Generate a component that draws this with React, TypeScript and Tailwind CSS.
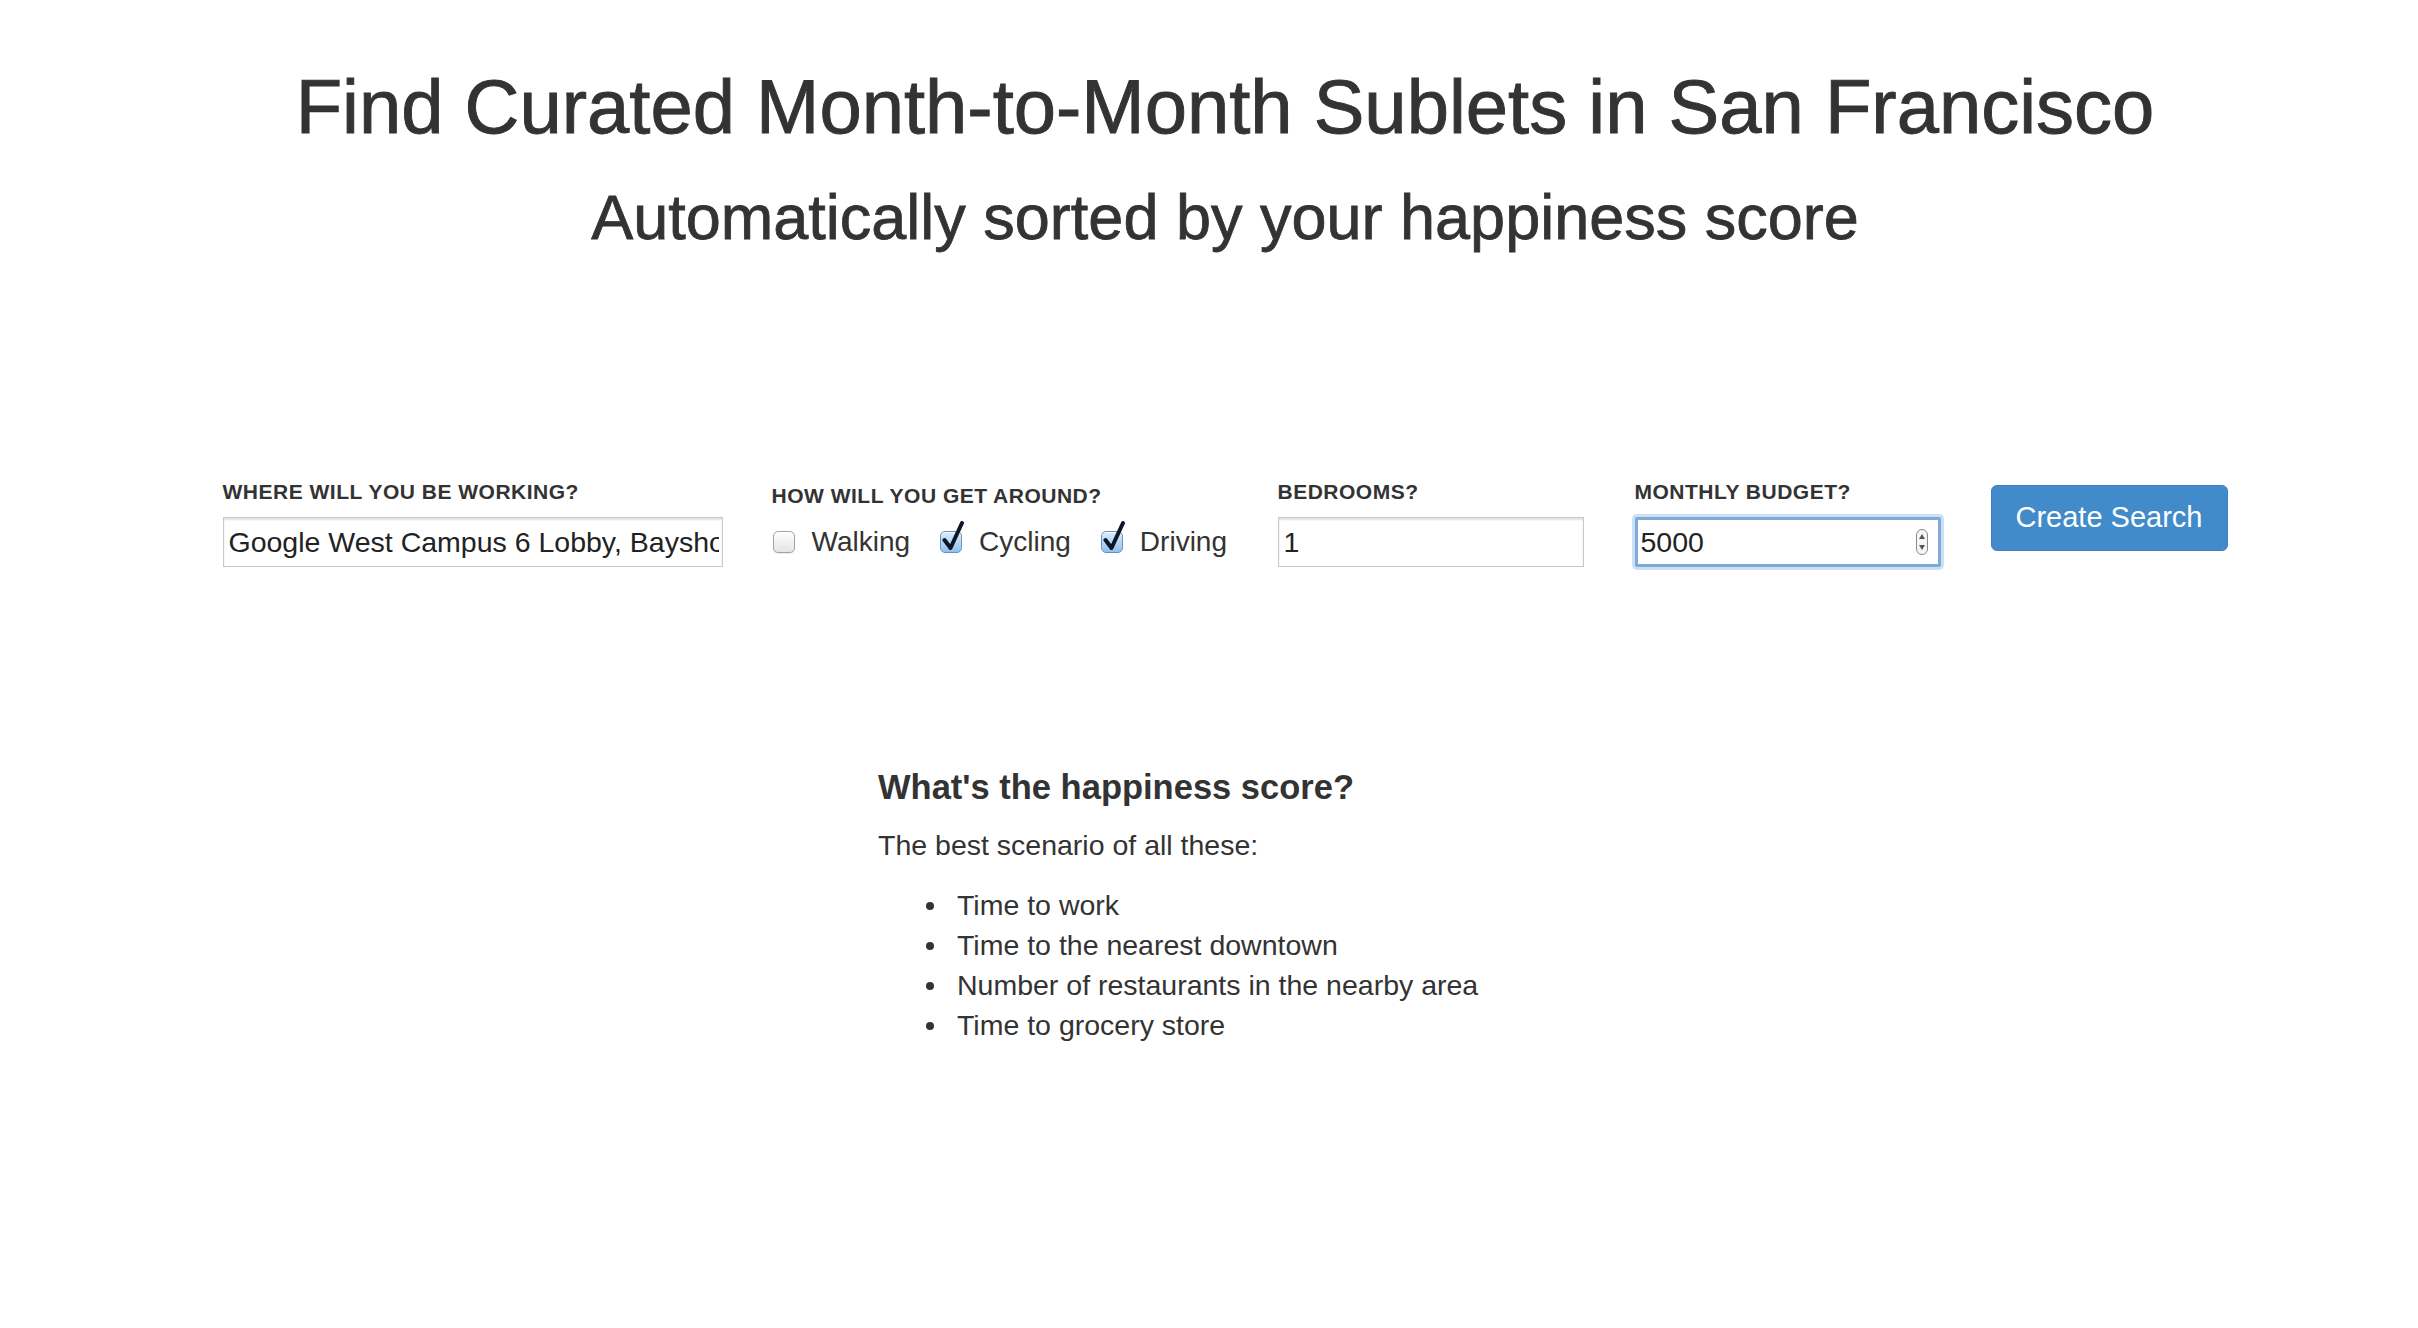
import React from 'react';

const FONT = "font-['Liberation_Sans',Arial,Helvetica,sans-serif]";

const Check: React.FC<{ checked?: boolean; label: string }> = ({ checked, label }) => (
  <label className="flex items-center">
    <span className="relative inline-block h-[22px] w-[22px]">
      {checked ? (
        <span className="block h-[22px] w-[22px] rounded-[5px] border border-[#6f8fb8] bg-gradient-to-b from-[#dcecfd] to-[#8fc0ef] shadow-[inset_0_1px_1px_rgba(255,255,255,0.8)]" />
      ) : (
        <span className="block h-[22px] w-[22px] rounded-[5px] border border-[#a3a3a3] bg-gradient-to-b from-[#ffffff] to-[#e4e4e4] shadow-[0_1px_1px_rgba(0,0,0,0.08)]" />
      )}
      {checked && (
        <svg className="absolute -top-[10px] left-[1px]" width="26" height="32" viewBox="0 0 26 32">
          <path d="M3.5 19 L9.5 27 L21 2" fill="none" stroke="#0d1626" strokeWidth="4" strokeLinecap="round" strokeLinejoin="round" />
        </svg>
      )}
    </span>
    <span className="ml-[17px] text-[28px] leading-[32px]">{label}</span>
  </label>
);

const Label: React.FC<{ children: React.ReactNode; className?: string }> = ({ children, className }) => (
  <div className={`text-[21px] leading-[24px] font-bold uppercase tracking-[0.5px] text-[#333] ${className || ''}`}>
    {children}
  </div>
);

const items = [
  'Time to work',
  'Time to the nearest downtown',
  'Number of restaurants in the nearby area',
  'Time to grocery store',
];

export default function App() {
  return (
    <div className={`min-h-screen bg-white pl-[32px] pb-[200px] text-[#333] ${FONT}`}>
      <h1 className="pt-[67px] text-center text-[76px] leading-[80px] font-normal [-webkit-text-stroke:0.9px_#333]">
        Find Curated Month-to-Month Sublets in San Francisco
      </h1>
      <h2 className="mt-[37px] text-center text-[63px] leading-[66px] font-normal [-webkit-text-stroke:0.8px_#333]">
        Automatically sorted by your happiness score
      </h2>

      {/* search form */}
      <div className="mt-[230px] flex items-start justify-center">
        <div className="w-[500px]">
          <Label>Where will you be working?</Label>
          <input
            readOnly
            value="Google West Campus 6 Lobby, Bayshore Parkway, Mountain View, CA"
            className="mt-[13px] h-[50px] w-full border border-[#c8c8c8] bg-white pl-[5px] pr-[3px] text-[28.5px] text-[#222] shadow-[inset_0_2px_2px_rgba(0,0,0,0.12)] outline-none"
          />
        </div>

        <div className="ml-[49px] w-[457px]">
          <Label className="mt-[4px]">How will you get around?</Label>
          <div className="mt-[9px] flex h-[50px] items-center gap-[30px] pl-[1px]">
            <Check label="Walking" />
            <Check checked label="Cycling" />
            <Check checked label="Driving" />
          </div>
        </div>

        <div className="ml-[49px] w-[306px]">
          <Label>Bedrooms?</Label>
          <input
            readOnly
            value="1"
            className="mt-[13px] h-[50px] w-full border border-[#c8c8c8] bg-white px-[5px] text-[28.5px] text-[#222] shadow-[inset_0_2px_2px_rgba(0,0,0,0.12)] outline-none"
          />
        </div>

        <div className="ml-[51px] w-[306px]">
          <Label>Monthly Budget?</Label>
          <div className="mt-[13px] flex h-[50px] w-full items-center rounded-[2px] border-[3px] border-[#7eaad9] bg-white pr-[10px] shadow-[0_0_0_3px_rgba(140,185,232,0.45)]">
            <input
              readOnly
              value="5000"
              className="h-full min-w-0 flex-1 bg-transparent px-[3px] text-[28.5px] text-[#222] outline-none"
            />
            <svg width="12" height="26" viewBox="0 0 12 26">
              <rect x="0.5" y="0.5" width="11" height="25" rx="5.5" fill="#f6f6f6" stroke="#8a8a8a" />
              <path d="M3 10 L6 5 L9 10 Z" fill="#555" />
              <path d="M3 16 L6 21 L9 16 Z" fill="#555" />
            </svg>
          </div>
        </div>

        <button className="ml-[50px] mt-[5px] h-[66px] w-[237px] rounded-[6px] border border-[#3c82c2] bg-[#428bca] text-[29px] text-white">
          Create Search
        </button>
      </div>

      {/* explanation */}
      <div className="mx-auto mt-[200px] w-[694px]">
        <h4 className="text-[34.5px] leading-[40px] font-bold">What's the happiness score?</h4>
        <p className="mt-[18px] text-[28.5px] leading-[40px]">The best scenario of all these:</p>
        <ul className="mt-[20px] pl-[48px] text-[28.5px] leading-[40px]">
          {items.map((item) => (
            <li key={item} className="flex items-center">
              <span className="mt-[2px] h-[8px] w-[8px] shrink-0 rounded-full bg-[#333]" />
              <span className="ml-[23px]">{item}</span>
            </li>
          ))}
        </ul>
      </div>
    </div>
  );
}
